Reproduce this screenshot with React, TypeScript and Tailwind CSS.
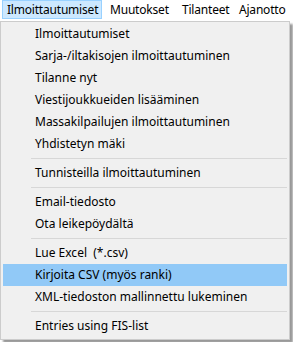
import React from "react";

type Entry = { label: string; active?: boolean } | "sep";

const ITEMS: Entry[] = [
  { label: "Ilmoittautumiset" },
  { label: "Sarja-/iltakisojen ilmoittautuminen" },
  { label: "Tilanne nyt" },
  { label: "Viestijoukkueiden lisääminen" },
  { label: "Massakilpailujen ilmoittautuminen" },
  { label: "Yhdistetyn mäki" },
  "sep",
  { label: "Tunnisteilla ilmoittautuminen" },
  "sep",
  { label: "Email-tiedosto" },
  { label: "Ota leikepöydältä" },
  "sep",
  { label: "Lue Excel  (*.csv)" },
  { label: "Kirjoita CSV (myös ranki)", active: true },
  { label: "XML-tiedoston mallinnettu lukeminen" },
  "sep",
  { label: "Entries using FIS-list" },
];

export default function App() {
  return (
    <div className="h-[342px] w-[293px] overflow-hidden bg-white text-[12px] text-black [font-family:'Noto_Sans','Liberation_Sans',sans-serif]">
      {/* menu bar */}
      <div className="flex h-[21px] items-start tracking-[-0.2px] whitespace-nowrap">
        <div className="ml-[2px] flex h-[19px] w-[100px] shrink-0 items-center border border-[#99d1ff] bg-[#cce8ff] pl-[4px]">
          Ilmoittautumiset
        </div>
        <div className="ml-[8px] flex h-[19px] w-[72px] shrink-0 items-center">Muutokset</div>
        <div className="flex h-[19px] w-[57px] shrink-0 items-center">Tilanteet</div>
        <div className="flex h-[19px] shrink-0 items-center">Ajanotto</div>
      </div>

      {/* dropdown */}
      <div className="flex w-[290px] flex-col border border-[#cccccc] bg-[#f0f0f0] px-[2px] pt-[1px] pb-[2px] shadow-[3px_3px_2px_rgba(0,0,0,0.4)]">
        {ITEMS.map((it, i) =>
          it === "sep" ? (
            <div key={i} className="flex h-[7px] items-center pl-[28px]">
              <div className="h-px w-full bg-[#d7d7d7]" />
            </div>
          ) : (
            <div
              key={i}
              className={
                "flex h-[22px] items-center pl-[32px] whitespace-pre " +
                (it.active ? "bg-[#91c9f7]" : "")
              }
            >
              {it.label}
            </div>
          ),
        )}
      </div>
    </div>
  );
}
